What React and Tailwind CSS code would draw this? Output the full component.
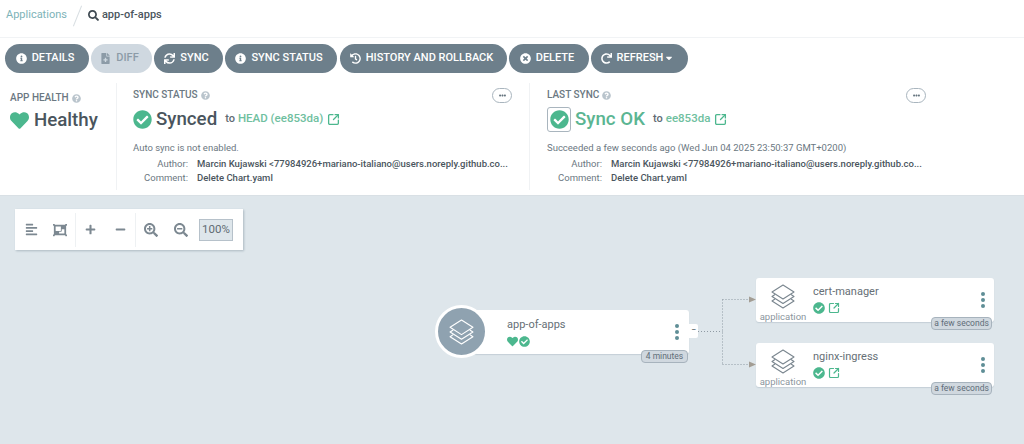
import React from "react";
import { FaInfoCircle, FaFileMedical, FaSync, FaHistory, FaTimesCircle, FaRedo, FaCaretDown, FaHeart, FaCheckCircle, FaSearch, FaSearchPlus, FaSearchMinus, FaPlus, FaMinus, FaAlignLeft, FaObjectGroup, FaQuestionCircle, FaEllipsisH } from "react-icons/fa";
import { SquareArrowOutUpRight } from "lucide-react";

const AUTHOR = "Marcin Kujawski <77984926+mariano-italiano@users.noreply.github.co...";

function ToolButton({ icon: Icon, label, width, disabled, caret }) {
  return (
    <button className={`flex h-[29px] items-center justify-center gap-[5px] rounded-full pr-[4px] text-[11px] font-medium ${width} ${disabled ? "bg-[#cfd8e0] text-[#8c9ba7]" : "bg-[#6d7f8b] text-white"}`}>
      <Icon className="text-[11px]" />
      {caret ? (
        <span className="flex items-center gap-[1px]">{label}<FaCaretDown className="text-[10px]" /></span>
      ) : label}
    </button>
  );
}

function Layers({ className }) {
  return (
    <svg viewBox="0 0 26 26" fill="none" stroke="currentColor" strokeWidth="1.1" strokeLinejoin="round" className={className}>
      <path d="M13 2 L24 9 L13 16 L2 9 Z" />
      <path d="M5 11.5 L2 13.5 L13 20.5 L24 13.5 L21 11.5" />
      <path d="M5 16 L2 18 L13 25 L24 18 L21 16" />
    </svg>
  );
}

function Check({ className }) {
  return <FaCheckCircle className={`text-[#4cb78e] ${className}`} />;
}

function Help() {
  return <FaQuestionCircle className="text-[9px] text-[#b9c4cc]" />;
}

function MoreButton({ className }) {
  return (
    <div className={`absolute top-[5px] flex h-[15px] w-[20px] items-center justify-center rounded-full border border-[#a9b5be] text-[7px] text-[#66757f] ${className}`}>
      <FaEllipsisH />
    </div>
  );
}

function MetaRows({ comment }) {
  return (
    <div className="mt-[2px] text-[9.5px] leading-[13.5px]">
      <div className="flex">
        <span className="w-[55px] text-right text-[#6b7882]">Author:</span>
        <span className="ml-[9px] font-medium text-[#4a555d]">{AUTHOR}</span>
      </div>
      <div className="flex">
        <span className="w-[55px] text-right text-[#6b7882]">Comment:</span>
        <span className="ml-[9px] font-medium text-[#4a555d]">{comment}</span>
      </div>
    </div>
  );
}

function Dots() {
  return (
    <div className="flex flex-col gap-[2px]">
      <span className="h-[4px] w-[4px] rounded-full bg-[#5f8e96]" />
      <span className="h-[4px] w-[4px] rounded-full bg-[#5f8e96]" />
      <span className="h-[4px] w-[4px] rounded-full bg-[#5f8e96]" />
    </div>
  );
}

function Age({ children, className }) {
  return (
    <div className={`absolute flex h-[13px] items-center justify-center rounded-[4px] border border-[#a7b3bd] bg-[#d0d8df] text-[8.5px] text-[#5f6d78] ${className}`}>
      {children}
    </div>
  );
}

function ChildNode({ name, top }) {
  return (
    <div className={`absolute left-[756px] flex h-[44px] w-[238px] items-center rounded-[3px] bg-white shadow-[0_1px_1px_rgba(120,140,155,0.25)] ${top}`}>
      <div className="flex w-[54px] flex-col items-center text-[#7a868f]">
        <Layers className="mt-[5px] h-[26px] w-[26px]" />
        <span className="mt-[2px] text-[9.5px] leading-[12px] text-[#8b969e]">application</span>
      </div>
      <div className="ml-[3px] flex-1 pb-[2px]">
        <div className="text-[11px] leading-[14px] text-[#666f76]">{name}</div>
        <div className="mt-[3px] flex items-center gap-[3px]">
          <Check className="text-[12px]" />
          <SquareArrowOutUpRight strokeWidth={2.4} className="h-[12px] w-[12px] text-[#4cb78e]" />
        </div>
      </div>
      <div className="mr-[9px]"><Dots /></div>
      <Age className="top-[39px] right-[2px] w-[61px]">a few seconds</Age>
    </div>
  );
}

export default function App() {
  return (
    <div className="flex h-[444px] w-[1024px] flex-col overflow-hidden bg-white font-['Roboto',sans-serif]">
      <header className="flex h-[38px] items-center border-b border-[#f1f3f5] pb-[6px] pl-[6px] text-[11px]">
        <span className="text-[#7db3b8]">Applications</span>
        <span className="mx-[10px] h-[22px] w-px rotate-[22deg] bg-[#d9dfe3]" />
        <FaSearch className="text-[11px] text-[#3f4a52]" />
        <span className="ml-[3px] font-medium text-[#4a555d]">app-of-apps</span>
      </header>

      <div className="flex h-[40px] items-center gap-[2px] pl-[5px]">
        <ToolButton icon={FaInfoCircle} label="DETAILS" width="w-[84px]" />
        <ToolButton icon={FaFileMedical} label="DIFF" width="w-[61px]" disabled />
        <ToolButton icon={FaSync} label="SYNC" width="w-[69px]" />
        <ToolButton icon={FaInfoCircle} label="SYNC STATUS" width="w-[112px]" />
        <ToolButton icon={FaHistory} label="HISTORY AND ROLLBACK" width="ml-[1px] w-[167px]" />
        <ToolButton icon={FaTimesCircle} label="DELETE" width="w-[80px]" />
        <ToolButton icon={FaRedo} label="REFRESH" width="w-[97px]" caret />
      </div>

      <section className="flex h-[118px] border-b border-[#d9e0e5]">
        <div className="w-[116px] pl-[10px] pt-[13px]">
          <div className="flex items-center gap-[3px] text-[10px] font-medium leading-[14px] text-[#6b7882]">APP HEALTH <Help /></div>
          <div className="mt-[2px] flex items-center gap-[5px]">
            <FaHeart className="text-[19px] text-[#4cb78e]" />
            <span className="text-[18.7px] font-medium leading-[26px] text-[#4a555d]">Healthy</span>
          </div>
        </div>

        <div className="relative my-[5px] w-[414px] border-x border-[#f0f2f4] pl-[16px] pt-[5px]">
          <div className="flex items-center gap-[3px] text-[10px] font-medium leading-[14px] text-[#6b7882]">SYNC STATUS <Help /></div>
          <div className="mt-[4px] flex h-[26px] items-center">
            <Check className="text-[19px]" />
            <span className="ml-[4px] text-[18.7px] font-medium text-[#4a555d]">Synced</span>
            <span className="ml-[8px] text-[11px] font-medium text-[#5f6b73]">to</span>
            <span className="ml-[3px] text-[11.5px] font-medium text-[#6fc0a0]">HEAD (ee853da)</span>
            <SquareArrowOutUpRight strokeWidth={2.4} className="ml-[4px] h-[13px] w-[13px] text-[#4cb78e]" />
          </div>
          <div className="mt-[9px] text-[9.5px] leading-[14px] text-[#6b7882]">Auto sync is not enabled.</div>
          <MetaRows comment="Delete Chart.yaml" />
          <MoreButton className="left-[375px]" />
        </div>

        <div className="relative my-[5px] flex-1 pl-[17px] pt-[5px]">
          <div className="flex items-center gap-[3px] text-[10px] font-medium leading-[14px] text-[#6b7882]">LAST SYNC <Help /></div>
          <div className="mt-[4px] flex h-[26px] items-center">
            <div className="flex h-[25px] w-[24px] items-center justify-center rounded-[3px] border border-[#a9b5be]">
              <Check className="text-[19px]" />
            </div>
            <span className="ml-[4px] text-[18.7px] font-medium text-[#5bb592]">Sync OK</span>
            <span className="ml-[8px] text-[11px] font-medium text-[#5f6b73]">to</span>
            <span className="ml-[3px] text-[11.5px] font-medium text-[#6fc0a0]">ee853da</span>
            <SquareArrowOutUpRight strokeWidth={2.4} className="ml-[4px] h-[13px] w-[13px] text-[#4cb78e]" />
          </div>
          <div className="mt-[9px] text-[9.5px] leading-[14px] text-[#6b7882]">Succeeded a few seconds ago (Wed Jun 04 2025 23:50:37 GMT+0200)</div>
          <MetaRows comment="Delete Chart.yaml" />
          <MoreButton className="left-[376px]" />
        </div>
      </section>

      <main className="relative flex-1 bg-[#dee6eb]">
        <div className="absolute left-[15px] top-[13px] flex h-[41px] w-[228px] items-center bg-white pl-[10px] text-[#7c8891] shadow-[1px_1px_2px_rgba(100,120,135,0.4)]">
          <FaAlignLeft className="text-[13px]" />
          <FaObjectGroup className="ml-[15px] text-[14px]" />
          <span className="ml-[8px] h-[34px] w-px bg-[#eef1f3]" />
          <FaPlus className="ml-[9px] text-[11px]" />
          <FaMinus className="ml-[19px] text-[11px]" />
          <span className="ml-[9px] h-[34px] w-px bg-[#eef1f3]" />
          <FaSearchPlus className="ml-[8px] text-[14px]" />
          <FaSearchMinus className="ml-[16px] text-[14px]" />
          <span className="ml-[11px] flex h-[22px] w-[34px] items-center justify-center border border-[#b6c1ca] bg-[#dee6eb] text-[11.5px] text-[#5f6b73]">100%</span>
        </div>

        <svg className="absolute left-0 top-0 h-[248px] w-[1024px]" fill="none">
          <g stroke="#8f9aa3" strokeWidth="1" strokeDasharray="1 2">
            <path d="M698 135.5 H722.5 M722.5 103.5 V168.5 M722.5 103.5 H750 M722.5 168.5 H750" />
          </g>
          <path d="M749 100.5 L756 103.5 L749 106.5 Z M749 165.5 L756 168.5 L749 171.5 Z" fill="#a39d94" />
        </svg>

        <div className="absolute left-[474px] top-[114px] flex h-[44px] w-[215px] items-center rounded-[3px] bg-white shadow-[0_1px_1px_rgba(120,140,155,0.25)]">
          <div className="ml-[33px] flex-1">
            <div className="text-[11px] leading-[14px] text-[#666f76]">app-of-apps</div>
            <div className="mt-[4px] flex items-center gap-[1px]">
              <FaHeart className="text-[11px] text-[#4cb78e]" />
              <Check className="text-[11px]" />
            </div>
          </div>
          <div className="mr-[10px]"><Dots /></div>
          <div className="absolute left-[215px] top-[14px] flex h-[14px] w-[9px] items-center justify-center rounded-r-[2px] bg-white text-[9px] text-[#4a555d]">−</div>
          <Age className="left-[167px] top-[40px] w-[47px]">4 minutes</Age>
        </div>
        <div className="absolute left-[435px] top-[109px] flex h-[53px] w-[53px] items-center justify-center rounded-full border-[3px] border-white bg-[#8fa2b0] text-white">
          <Layers className="h-[27px] w-[27px]" />
        </div>

        <ChildNode name="cert-manager" top="top-[82px]" />
        <ChildNode name="nginx-ingress" top="top-[147px]" />
      </main>
    </div>
  );
}
